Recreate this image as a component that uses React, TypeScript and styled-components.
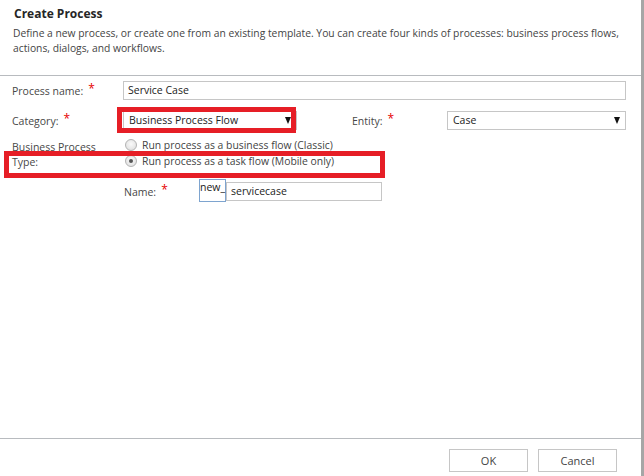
import React from "react";
import styled, { createGlobalStyle } from "styled-components";

const GlobalStyle = createGlobalStyle`
  html, body {
    margin: 0;
    padding: 0;
    background: #ffffff;
  }
  body {
    font-family: "Open Sans", "Noto Sans", "Liberation Sans", sans-serif;
    color: #444444;
  }
`;

const Frame = styled.div`
  position: relative;
  width: 644px;
  height: 476px;
  box-sizing: border-box;
  border-right: 3px solid #a6a6a6;
  display: flex;
  flex-direction: column;
  background: #ffffff;
  overflow: hidden;
`;

const Header = styled.div`
  height: 76px;
  box-sizing: border-box;
  padding: 5px 12px 0 13px;
  border-bottom: 1px solid #b8bbbf;
`;

const Title = styled.h1`
  margin: 0 0 0 1px;
  font-size: 12px;
  font-weight: 700;
  line-height: 18px;
  color: #262626;
`;

const Description = styled.p`
  margin: 3px 0 0 0;
  font-size: 10.3px;
  line-height: 15px;
  color: #444444;
`;

const Body = styled.div`
  flex: 1;
  padding: 5px 15px 0 12px;
  display: flex;
  flex-direction: column;
`;

const Row = styled.div<{ $top?: number }>`
  display: flex;
  align-items: center;
  margin-top: ${(p) => p.$top ?? 0}px;
`;

const Label = styled.div<{ $width: number; $offset?: number }>`
  flex: 0 0 auto;
  width: ${(p) => p.$width}px;
  margin-left: ${(p) => p.$offset ?? 0}px;
  font-size: 10.5px;
  line-height: 15px;
  color: #474747;
`;

const Required = styled.span`
  color: #e60000;
  font-size: 12px;
  margin-left: 5px;
  position: relative;
  top: -2px;
`;

const TextInput = styled.div<{ $width?: number }>`
  box-sizing: border-box;
  height: 19px;
  ${(p) => (p.$width ? `flex: 0 0 ${p.$width}px;` : "flex: 1;")}
  border: 1px solid #c6c6c6;
  padding: 0 4px;
  font-size: 10.5px;
  line-height: 17px;
  color: #222222;
  white-space: nowrap;
`;

const Select = styled(TextInput)`
  display: flex;
  align-items: center;
  justify-content: space-between;
  padding: 0 5px 0 5px;
`;

const Caret = styled.span`
  width: 0;
  height: 0;
  border-left: 3.5px solid transparent;
  border-right: 3.5px solid transparent;
  border-top: 7px solid #111111;
`;

const BusinessRow = styled.div`
  display: flex;
  margin-top: 9px;
`;

const StackLabel = styled(Label)`
  padding-top: 1px;
`;

const RadioGroup = styled.div`
  display: flex;
  flex-direction: column;
  gap: 4px;
  margin-left: 2px;
`;

const RadioOption = styled.div`
  display: flex;
  align-items: center;
  gap: 5px;
  font-size: 10.4px;
  line-height: 12px;
  color: #444444;
`;

const RadioDot = styled.span<{ $checked?: boolean }>`
  position: relative;
  flex: 0 0 auto;
  width: 12px;
  height: 12px;
  box-sizing: border-box;
  border-radius: 50%;
  border: 1px solid #b3b3b3;
  background: radial-gradient(circle at 50% 40%, #fafafa 0%, #e4e4e4 70%, #d6d6d6 100%);

  &::after {
    content: "";
    display: ${(p) => (p.$checked ? "block" : "none")};
    position: absolute;
    left: 3px;
    top: 3px;
    width: 4px;
    height: 4px;
    border-radius: 50%;
    background: #555555;
  }
`;

const NameRow = styled(Row)`
  align-items: flex-start;
`;

const NameLabel = styled(Label)`
  padding-top: 4px;
`;

const Prefix = styled.div`
  position: relative;
  z-index: 1;
  flex: 0 0 24px;
  box-sizing: border-box;
  height: 23px;
  border: 1px solid #7ea4cf;
  font-size: 10.5px;
  line-height: 14px;
  color: #222222;
  white-space: nowrap;
  margin-top: -1px;
`;

const NameInput = styled(TextInput)`
  margin-top: 2px;
`;

const Footer = styled.div`
  height: 38px;
  box-sizing: border-box;
  border-top: 1px solid #b8bbbf;
  padding: 10px 24px 0 0;
  display: flex;
  justify-content: flex-end;
  gap: 10px;
`;

const Button = styled.button`
  width: 79px;
  height: 23px;
  box-sizing: border-box;
  border: 1px solid #c6c6c6;
  background: #ffffff;
  font-family: inherit;
  font-size: 11px;
  color: #444444;
  padding: 0;
`;

/* red highlight boxes drawn over the form */
const Callout = styled.div<{ $x: number; $y: number; $w: number; $h: number }>`
  position: absolute;
  left: ${(p) => p.$x}px;
  top: ${(p) => p.$y}px;
  width: ${(p) => p.$w}px;
  height: ${(p) => p.$h}px;
  box-sizing: border-box;
  border: 5px solid #e61e26;
  pointer-events: none;
`;

export default function App() {
  return (
    <>
      <GlobalStyle />
      <Frame>
        <Header>
          <Title>Create Process</Title>
          <Description>
            Define a new process, or create one from an existing template. You can create four kinds of processes: business process flows,
            actions, dialogs, and workflows.
          </Description>
        </Header>

        <Body>
          <Row>
            <Label $width={111}>
              Process name:<Required>*</Required>
            </Label>
            <TextInput>Service Case</TextInput>
          </Row>

          <Row $top={11}>
            <Label $width={111}>
              Category:<Required>*</Required>
            </Label>
            <Select $width={174}>
              Business Process Flow
              <Caret />
            </Select>
            <Label $width={95} $offset={55}>
              Entity:<Required>*</Required>
            </Label>
            <Select>
              Case
              <Caret />
            </Select>
          </Row>

          <BusinessRow>
            <StackLabel $width={111}>
              Business Process
              <br />
              Type:
            </StackLabel>
            <RadioGroup>
              <RadioOption>
                <RadioDot />
                Run process as a business flow (Classic)
              </RadioOption>
              <RadioOption>
                <RadioDot $checked />
                Run process as a task flow (Mobile only)
              </RadioOption>
            </RadioGroup>
          </BusinessRow>

          <NameRow $top={10}>
            <NameLabel $width={75} $offset={112}>
              Name:<Required>*</Required>
            </NameLabel>
            <Prefix>new_</Prefix>
            <NameInput $width={156}>servicecase</NameInput>
          </NameRow>
        </Body>

        <Footer>
          <Button>OK</Button>
          <Button>Cancel</Button>
        </Footer>

        <Callout $x={117} $y={107} $w={179} $h={26} />
        <Callout $x={4} $y={151} $w={381} $h={27} />
      </Frame>
    </>
  );
}
